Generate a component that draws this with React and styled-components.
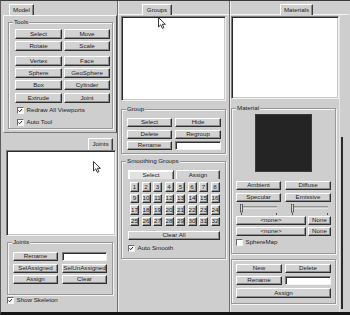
import React from "react";
import styled, { createGlobalStyle } from "styled-components";

const GlobalStyle = createGlobalStyle`
  * { box-sizing: border-box; }
  body {
    margin: 0;
    background: #fff;
    font-family: "Liberation Sans", Arial, sans-serif;
  }
`;

const Screen = styled.div`
  width: 350px;
  height: 315px;
  display: flex;
  background: #cecece;
  border-top: 1px solid #3a3a3a;
  border-left: 1px solid #5a5a5a;
  border-bottom: 3px solid #151515;
  font-size: 6.2px;
  line-height: 1;
  color: #1c1c1c;
  overflow: hidden;
`;

const Column = styled.div`
  display: flex;
  flex-direction: column;
  flex-shrink: 0;
  width: ${(p) => p.$w}px;
  ${(p) => p.$divider && "border-left: 1px solid #6e6e6e; box-shadow: inset 1px 0 #ececec;"}
`;

const TabStrip = styled.div`
  display: flex;
  flex-shrink: 0;
  align-items: flex-end;
  justify-content: ${(p) => (p.$end ? "flex-end" : "flex-start")};
  height: ${(p) => p.$h || 14}px;
  padding-left: ${(p) => p.$pl || 0}px;
  padding-right: ${(p) => p.$pr || 0}px;
  border-bottom: ${(p) => (p.$line ? "1px solid #f2f2f2" : "none")};
`;

const Tab = styled.div`
  width: ${(p) => p.$w}px;
  height: ${(p) => p.$h || 11}px;
  margin-bottom: ${(p) => (p.$line ? -1 : 0)}px;
  display: flex;
  align-items: center;
  justify-content: center;
  background: #d0d0d0;
  border-top: 1px solid #fff;
  border-left: 1px solid #fff;
  border-right: 1px solid #3c3c3c;
  box-shadow: inset -1px 0 #8a8a8a;
  border-radius: 1px 1px 0 0;
`;

const Panel = styled.div`
  width: ${(p) => p.$w}px;
  height: ${(p) => p.$h}px;
  margin-left: ${(p) => p.$ml || 0}px;
  border-top: 1px solid #f6f6f6;
  border-left: 1px solid #f6f6f6;
  border-right: 1px solid #454545;
  border-bottom: 1px solid #7a7a7a;
  padding-left: 4px;
  padding-top: 6px;
`;

const Body = styled.div`
  display: flex;
  flex-direction: ${(p) => (p.$row ? "row" : "column")};
  flex: 1;
  padding-left: ${(p) => p.$pl || 0}px;
`;

const GroupBox = styled.div`
  position: relative;
  display: flex;
  flex-direction: column;
  flex-shrink: 0;
  width: ${(p) => p.$w}px;
  height: ${(p) => p.$h}px;
  margin-top: ${(p) => p.$mt || 0}px;
  margin-left: ${(p) => p.$ml || 0}px;
  padding-top: ${(p) => p.$pt || 0}px;
  padding-left: ${(p) => p.$pl || 0}px;
  border: 1px solid #979797;
  box-shadow: 1px 1px 0 #f4f4f4, inset 1px 1px 0 #f4f4f4;
`;

const Legend = styled.span`
  position: absolute;
  top: -4px;
  left: 4px;
  padding: 0 1px;
  background: #cecece;
`;

const BtnGrid = styled.div`
  display: grid;
  grid-template-columns: ${(p) => p.$cols};
  column-gap: ${(p) => p.$gap || 2}px;
  row-gap: ${(p) => p.$rg || 2}px;
  margin-top: ${(p) => p.$mt || 0}px;
  margin-left: ${(p) => p.$ml || 0}px;
`;

const Btn = styled.button`
  height: ${(p) => p.$h || 9}px;
  width: ${(p) => (p.$w ? `${p.$w}px` : "auto")};
  margin: ${(p) => p.$mt || 0}px 0 0 0;
  padding: 0;
  display: flex;
  align-items: center;
  justify-content: center;
  font: inherit;
  color: inherit;
  white-space: nowrap;
  background: #d2d2d2;
  border-top: 1px solid #fff;
  border-left: 1px solid #fff;
  border-right: 1px solid #2e2e2e;
  border-bottom: 1px solid #2e2e2e;
  box-shadow: inset -1px -1px #8c8c8c;
  ${(p) => p.$span && "grid-column: 1 / -1;"}
`;

const SubTab = styled.div`
  height: 9px;
  display: flex;
  align-items: center;
  justify-content: center;
  background: ${(p) => (p.$active ? "#e2e2e2" : "#d2d2d2")};
  border-top: 1px solid #fff;
  border-left: 1px solid #fff;
  border-right: 1px solid #3a3a3a;
  box-shadow: ${(p) => (p.$active ? "inset 1px 1px #fff, inset -1px 0 #8c8c8c" : "inset -1px 0 #8c8c8c")};
`;

const Cell = styled.div`
  height: 9.5px;
  display: flex;
  align-items: center;
  justify-content: center;
  background: #d2d2d2;
  border-top: 1px solid #fff;
  border-left: 1px solid #fff;
  border-right: 1px solid #2e2e2e;
  border-bottom: 1px solid #2e2e2e;
  box-shadow: inset -1px -1px #8c8c8c;
`;

const Field = styled.div`
  height: 9px;
  background: #fff;
  border-top: 1px solid #7c7c7c;
  border-left: 1px solid #7c7c7c;
  border-right: 1px solid #f4f4f4;
  border-bottom: 1px solid #f4f4f4;
  box-shadow: inset 1px 1px #303030;
`;

const ListBox = styled.div`
  position: relative;
  flex-shrink: 0;
  width: ${(p) => p.$w}px;
  height: ${(p) => p.$h}px;
  margin-top: ${(p) => p.$mt || 0}px;
  margin-left: ${(p) => p.$ml || 0}px;
  background: #fff;
  border-top: 1px solid #7a7a7a;
  border-left: 1px solid #7a7a7a;
  border-right: 1px solid #f2f2f2;
  border-bottom: 1px solid #f2f2f2;
  box-shadow: inset 1px 1px #2a2a2a, inset -1px -1px #c8c8c8;
`;

const Pointer = styled.svg`
  position: absolute;
  left: ${(p) => p.$x}px;
  top: ${(p) => p.$y}px;
`;

const CheckRow = styled.div`
  display: flex;
  align-items: center;
  gap: 3px;
  height: 7px;
  margin-top: ${(p) => p.$mt || 0}px;
  padding-left: ${(p) => p.$pl || 0}px;
  flex-shrink: 0;
`;

const Box = styled.span`
  width: 6.5px;
  height: 6.5px;
  display: flex;
  align-items: center;
  justify-content: center;
  background: #fff;
  border-top: 1px solid #6a6a6a;
  border-left: 1px solid #6a6a6a;
  border-right: 1px solid #f4f4f4;
  border-bottom: 1px solid #f4f4f4;
`;

const Preview = styled.div`
  width: 57px;
  height: 58px;
  margin-left: 19px;
  background: #242424;
  border: 1px solid #3a3a3a;
  flex-shrink: 0;
`;

const Slider = styled.svg`
  display: block;
  margin-left: ${(p) => p.$ml || 0}px;
`;

const ScrollStrip = styled.div`
  display: flex;
  flex: 1;
  flex-direction: column;
  border-left: 1px solid #e6e6e6;
`;

const Thumb = styled.div`
  flex: 1;
  width: 2px;
  margin: 122px 0 3px 1px;
  background: #2a2a2a;
`;

const Check = ({ on, label, mt, pl }) => (
  <CheckRow $mt={mt} $pl={pl}>
    <Box>
      {on && (
        <svg width="5" height="5" viewBox="0 0 5 5">
          <path d="M0.6 2.4 L1.9 3.8 L4.4 0.9" stroke="#111" strokeWidth="1.1" fill="none" />
        </svg>
      )}
    </Box>
    <span>{label}</span>
  </CheckRow>
);

const Arrow = ({ x, y }) => (
  <Pointer $x={x} $y={y} width="9" height="13" viewBox="0 0 9 13">
    <path d="M0.5 0.5 L0.5 10 L2.8 7.8 L4.4 11.4 L5.9 10.7 L4.4 7.3 L7.4 7.3 Z" fill="#fff" stroke="#222" strokeWidth="0.9" />
  </Pointer>
);

const TrackBar = ({ ml }) => (
  <Slider $ml={ml} width="40" height="11" viewBox="0 0 40 11">
    <line x1="2" y1="3" x2="38" y2="3" stroke="#555" strokeWidth="1" />
    <line x1="2" y1="4" x2="38" y2="4" stroke="#f4f4f4" strokeWidth="1" />
    <rect x="1.5" y="0" width="2" height="8" fill="#d8d8d8" stroke="#333" strokeWidth="0.7" />
    <line x1="2.5" y1="9" x2="2.5" y2="11" stroke="#333" strokeWidth="0.8" />
    <line x1="37.5" y1="9" x2="37.5" y2="11" stroke="#333" strokeWidth="0.8" />
  </Slider>
);

const numbers = Array.from({ length: 32 }, (_, i) => i + 1);

export default function App() {
  return (
    <>
      <GlobalStyle />
      <Screen>
        <Column $w={116}>
          <TabStrip $pl={8}>
            <Tab $w={25}>Model</Tab>
          </TabStrip>
          <Panel $ml={2} $w={114} $h={118}>
            <GroupBox $w={105} $h={107} $pt={6} $pl={6}>
              <Legend>Tools</Legend>
              <BtnGrid $cols="47px 46px">
                <Btn $h={10}>Select</Btn>
                <Btn $h={10}>Move</Btn>
                <Btn $h={10}>Rotate</Btn>
                <Btn $h={10}>Scale</Btn>
              </BtnGrid>
              <BtnGrid $cols="47px 46px" $mt={5}>
                <Btn $h={10}>Vertex</Btn>
                <Btn $h={10}>Face</Btn>
                <Btn $h={10}>Sphere</Btn>
                <Btn $h={10}>GeoSphere</Btn>
                <Btn $h={10}>Box</Btn>
                <Btn $h={10}>Cylinder</Btn>
              </BtnGrid>
              <BtnGrid $cols="47px 46px" $mt={3}>
                <Btn $h={10}>Extrude</Btn>
                <Btn $h={10}>Joint</Btn>
              </BtnGrid>
              <Check on label="Redraw All Viewports" mt={4} pl={2} />
              <Check on label="Auto Tool" mt={5} pl={2} />
            </GroupBox>
          </Panel>
          <TabStrip $h={17} $end $pr={4}>
            <Tab $w={25} $h={12}>Joints</Tab>
          </TabStrip>
          <ListBox $w={110} $h={86} $ml={5}>
            <Arrow x={86} y={10} />
          </ListBox>
          <GroupBox $w={106} $h={53} $mt={6} $ml={6} $pt={9} $pl={5}>
            <Legend>Joints</Legend>
            <BtnGrid $cols="45px 45px" $gap={4} $rg={2.5}>
              <Btn>Rename</Btn>
              <Field />
              <Btn>SelAssigned</Btn>
              <Btn>SelUnAssigned</Btn>
              <Btn>Assign</Btn>
              <Btn>Clear</Btn>
            </BtnGrid>
          </GroupBox>
          <Check on label="Show Skeleton" mt={2} pl={6} />
        </Column>

        <Column $w={112} $divider>
          <TabStrip $pl={24} $line>
            <Tab $w={30} $line>Groups</Tab>
          </TabStrip>
          <Body $pl={3}>
            <ListBox $w={105} $h={85} $mt={1}>
              <Arrow x={36} y={0} />
            </ListBox>
            <GroupBox $w={105} $h={45} $mt={8} $pt={8} $pl={5}>
              <Legend>Group</Legend>
              <BtnGrid $cols="45px 46px" $gap={3} $rg={2.5}>
                <Btn>Select</Btn>
                <Btn>Hide</Btn>
                <Btn>Delete</Btn>
                <Btn>Regroup</Btn>
                <Btn>Rename</Btn>
                <Field />
              </BtnGrid>
            </GroupBox>
            <GroupBox $w={105} $h={98} $mt={7} $pt={8} $pl={6}>
              <Legend>Smoothing Groups</Legend>
              <BtnGrid $cols="46px 44px" $gap={0}>
                <SubTab $active>Select</SubTab>
                <SubTab>Assign</SubTab>
              </BtnGrid>
              <BtnGrid $cols="repeat(8, 9px)" $gap={2.5} $rg={2} $mt={3} $ml={2}>
                {numbers.map((n) => (
                  <Cell key={n}>{n}</Cell>
                ))}
              </BtnGrid>
              <Btn $w={92} $mt={5}>Clear All</Btn>
              <Check on label="Auto Smooth" mt={5} />
            </GroupBox>
          </Body>
        </Column>

        <Column $w={120} $divider>
          <TabStrip $pl={50} $line>
            <Tab $w={33} $line>Materials</Tab>
          </TabStrip>
          <Body $row>
            <Body $pl={1}>
              <ListBox $w={108} $h={83} $mt={1} />
              <GroupBox $w={105} $h={146} $mt={9} $pt={5} $pl={4}>
                <Legend>Material</Legend>
                <Preview />
                <BtnGrid $cols="45px 46px" $gap={4} $rg={3} $mt={9}>
                  <Btn>Ambient</Btn>
                  <Btn>Diffuse</Btn>
                  <Btn>Specular</Btn>
                  <Btn>Emissive</Btn>
                </BtnGrid>
                <BtnGrid $cols="45px 46px" $gap={4} $mt={2}>
                  <TrackBar ml={3} />
                  <TrackBar ml={5} />
                </BtnGrid>
                <BtnGrid $cols="70px 23px" $gap={2} $rg={2} $mt={1}>
                  <Btn>&lt;none&gt;</Btn>
                  <Btn>None</Btn>
                  <Btn>&lt;none&gt;</Btn>
                  <Btn>None</Btn>
                </BtnGrid>
                <Check label="SphereMap" mt={3} />
              </GroupBox>
              <GroupBox $w={105} $h={45} $mt={5} $pt={4} $pl={4}>
                <BtnGrid $cols="46px 46px" $gap={3} $rg={3}>
                  <Btn>New</Btn>
                  <Btn>Delete</Btn>
                  <Btn>Rename</Btn>
                  <Field />
                  <Btn $span $h={10}>Assign</Btn>
                </BtnGrid>
              </GroupBox>
            </Body>
            <ScrollStrip>
              <Thumb />
            </ScrollStrip>
          </Body>
        </Column>
      </Screen>
    </>
  );
}
